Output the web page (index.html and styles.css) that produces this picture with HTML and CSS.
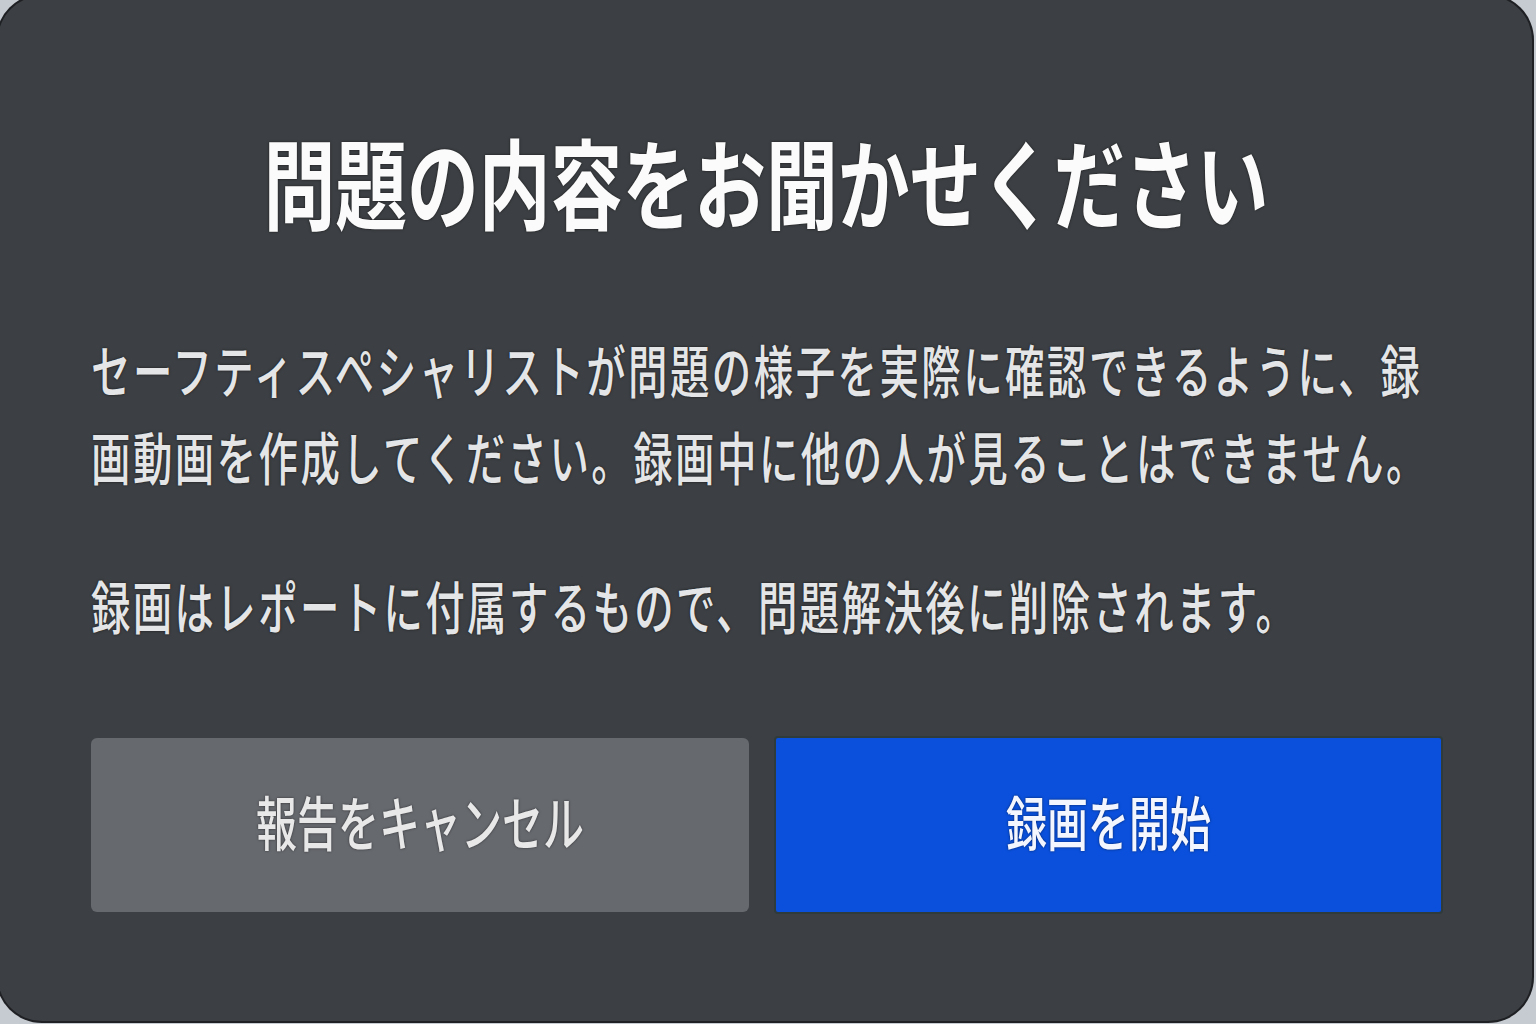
FILE: index.html
```html
<!DOCTYPE html>
<html lang="ja">
<head>
  <meta charset="UTF-8">
  <title>問題の内容をお聞かせください</title>
  <link rel="stylesheet" href="styles.css">
</head>
<body>

  <div class="dialog">
    <h1 class="title">問題の内容をお聞かせください</h1>

    <p class="text first">セーフティスペシャリストが問題の様子を実際に確認できるように、録画動画を作成してください。録画中に他の人が見ることはできません。</p>
    <p class="text second">録画はレポートに付属するもので、問題解決後に削除されます。</p>

    <div class="actions">
      <button class="btn btn-cancel"><span class="label">報告をキャンセル</span></button>
      <button class="btn btn-record"><span class="label">録画を開始</span></button>
    </div>
  </div>

</body>
</html>
```

FILE: styles.css
```css
body {
  margin: 0;
  height: 1024px;
  overflow: hidden;
  background: #c6cbd1;
  font-family: "Noto Sans CJK JP", "Noto Sans", sans-serif;
}

.dialog {
  box-sizing: border-box;
  margin: -4px 4px 0 -2px;
  height: 1025px;
  padding: 0 91px 0 93px;
  background: #3c3f43;
  border-radius: 44px;
  box-shadow: 0 0 0 2px #1e2023;
  display: flex;
  flex-direction: column;
}

/* glyphs are drawn taller than wide, so text gets stretched vertically */
.title {
  margin: 152px 0 0;
  font-size: 71.8px;
  line-height: 64px;
  font-weight: 700;
  color: #fbfbfb;
  text-align: center;
  text-shadow: 0 0 2px rgba(0,0,0,0.7);
  transform: scaleY(1.36);
}

.text {
  margin: 0;
  font-size: 39.4px;
  line-height: 60px;
  font-weight: 500;
  color: #e4e5e6;
  text-shadow: 0 0 2px rgba(0,0,0,0.7);
  transform: scaleY(1.45);
}

.text.first {
  margin-top: 140px;
  letter-spacing: 2.5px;
}

.text.second {
  margin-top: 102px;
  letter-spacing: 2.4px;
}

.actions {
  margin-top: 104px;
  display: grid;
  grid-template-columns: 658px 1fr;
  gap: 27px;
  height: 174px;
}

.btn {
  border: none;
  border-radius: 6px;
  font-family: inherit;
  font-size: 41px;
  font-weight: 500;
  padding: 0 0 10px;
  cursor: pointer;
  text-shadow: 0 0 2px rgba(0,0,0,0.6);
}

.label {
  display: block;
  transform: scaleY(1.45);
}

.btn-cancel {
  background: #66696e;
  color: #e8e8e8;
}

.btn-record {
  background: #0a50dc;
  color: #f4f6ff;
  border-radius: 2px;
  box-shadow: 0 0 0 2px #2f3a3a;
}
```
